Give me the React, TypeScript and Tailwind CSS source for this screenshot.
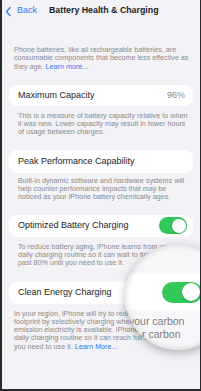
import { FC } from "react";

const Toggle: FC<{ big?: boolean }> = ({ big }) => (
  <div
    className={
      big
        ? "flex h-[21px] w-[40px] items-center justify-end rounded-full bg-[#34c759] pr-[2px]"
        : "flex h-[17px] w-[28px] items-center justify-end rounded-full bg-[#34c759] pr-[1.5px]"
    }
  >
    <div
      className={
        big
          ? "h-[18px] w-[18px] rounded-full bg-white shadow-[0_1px_2px_rgba(0,0,0,0.2)]"
          : "h-[14px] w-[14px] rounded-full bg-white shadow-[0_1px_2px_rgba(0,0,0,0.2)]"
      }
    />
  </div>
);

const Note: FC<{ lines: React.ReactNode[]; indent?: boolean; className?: string }> = ({
  lines,
  indent,
  className,
}) => (
  <div
    className={`${indent ? "pl-[16px]" : "pl-[12px]"} text-[7.2px] leading-[8.3px] text-[#8a8a8e] whitespace-nowrap ${className ?? ""}`}
  >
    {lines.map((l, i) => (
      <div key={i}>{l}</div>
    ))}
  </div>
);

const Card: FC<{ label: string; right?: React.ReactNode; h: string; className?: string }> = ({
  label,
  right,
  h,
  className,
}) => (
  <div
    className={`mx-[7px] flex ${h} items-center justify-between rounded-[8px] bg-white pl-[9px] pr-[6px] ${className ?? ""}`}
  >
    <span className="text-[9px] text-[#1c1c1e]">{label}</span>
    {right}
  </div>
);

export default function App() {
  return (
    <div
      className="relative h-[391px] w-full overflow-hidden border-b-2 border-l-2 border-r border-[#2a2a2e] bg-[#f2f2f7]"
      style={{ fontFamily: '"Liberation Sans", Arial, sans-serif' }}
    >
      {/* nav bar */}
      <div className="flex h-[22px] items-center">
        <div className="flex items-center pl-[2px] text-[#3478f6]">
          <svg width="8" height="11" viewBox="0 0 8 11" fill="none">
            <path d="M6 1.5L2.5 5.5L6 9.5" stroke="#3478f6" strokeWidth="1.3" strokeLinecap="round" strokeLinejoin="round" />
          </svg>
          <span className="ml-[5px] text-[9px]">Back</span>
        </div>
        <span className="ml-[12px] text-[8.8px] font-semibold text-[#1c1c1e]">
          Battery Health &amp; Charging
        </span>
      </div>

      <Note
        className="mt-[24px]"
        lines={[
          "Phone batteries, like all rechargeable batteries, are",
          "consumable components that become less effective as",
          <>
            they age. <span className="text-[#3478f6]">Learn more...</span>
          </>,
        ]}
      />

      <Card
        className="mt-[14px]"
        h="h-[21px]"
        label="Maximum Capacity"
        right={<span className="pr-[2px] text-[9px] text-[#8a8a8e]">96%</span>}
      />
      <Note
        indent
        className="mt-[6px]"
        lines={[
          "This is a measure of battery capacity relative to when",
          "it was new. Lower capacity may result in fewer hours",
          "of usage between charges.",
        ]}
      />

      <Card className="mt-[13px]" h="h-[23px]" label="Peak Performance Capability" />
      <Note
        indent
        className="mt-[4px]"
        lines={[
          "Built-in dynamic software and hardware systems will",
          "help counter performance impacts that may be",
          "noticed as your iPhone battery chemically ages.",
        ]}
      />

      <Card className="mt-[13px]" h="h-[22px]" label="Optimized Battery Charging" right={<Toggle />} />
      <Note
        indent
        className="mt-[6px]"
        lines={[
          "To reduce battery aging, iPhone learns from your",
          "daily charging routine so it can wait to finish charging",
          "past 80% until you need to use it.",
        ]}
      />

      <Card className="mt-[14px]" h="h-[22px]" label="Clean Energy Charging" right={<Toggle />} />
      <Note
        className="mt-[6px]"
        lines={[
          "In your region, iPhone will try to reduce your carbon",
          "footprint by selectively charging when lower carbon",
          "emission electricity is available. iPhone learns from your",
          "daily charging routine so it can reach full charge before",
          <>
            you need to use it. <span className="text-[#3478f6]">Learn More...</span>
          </>,
        ]}
      />

      {/* magnifier loupe */}
      <div className="absolute left-[123px] top-[244px] h-[106px] w-[106px] overflow-hidden rounded-full bg-[#f7f7f9] shadow-[0_3px_10px_rgba(0,0,0,0.28)]">
        <div className="flex flex-col">
          <div className="h-[30px]" />
          <div className="flex h-[36px] items-center bg-white pl-[37px]">
            <Toggle big />
          </div>
          <div className="mt-[5px] pl-[4px] text-[10.5px] leading-[13px] text-[#7a7a7e]">your carbon</div>
          <div className="pl-[17px] text-[10.5px] leading-[13px] text-[#7a7a7e]">r carbon</div>
        </div>
        <div className="absolute inset-0 rounded-full shadow-[inset_0_0_6px_rgba(0,0,0,0.18)]" />
      </div>
    </div>
  );
}
